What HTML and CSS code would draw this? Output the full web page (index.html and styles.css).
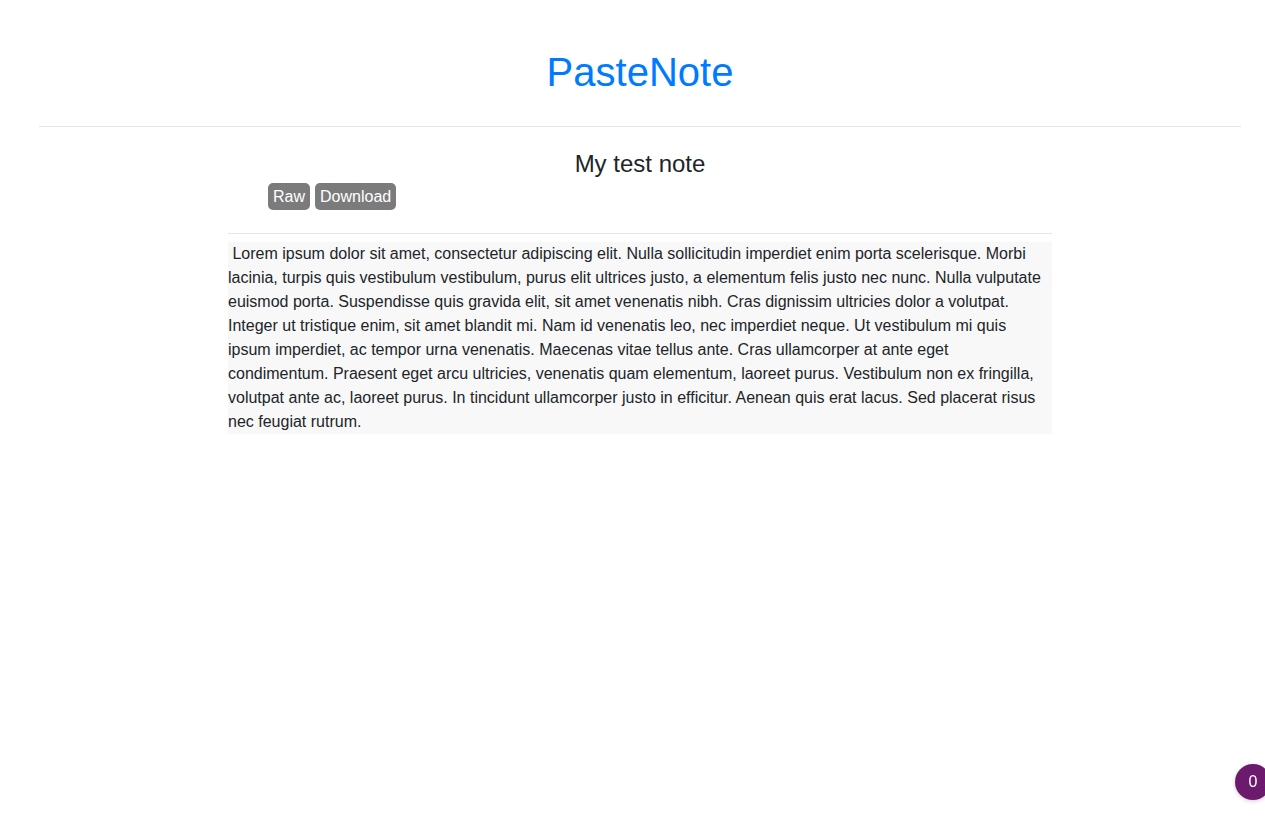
FILE: index.html
```html
<!DOCTYPE html>
<html>
<head>
<meta charset="utf-8">
<title>PasteNote</title>
<link rel="stylesheet" href="styles.css">
</head>
<body>
<div class="page">
  <header class="site-header">
    <h1 class="brand">PasteNote</h1>
  </header>
  <hr class="rule-wide">
  <main class="note">
    <h3 class="note-title">My test note</h3>
    <div class="actions">
      <a class="btn" href="#">Raw</a>
      <a class="btn" href="#">Download</a>
    </div>
    <hr class="rule">
    <div class="note-body"> Lorem ipsum dolor sit amet, consectetur adipiscing elit. Nulla sollicitudin imperdiet enim porta scelerisque. Morbi lacinia, turpis quis vestibulum vestibulum, purus elit ultrices justo, a elementum felis justo nec nunc. Nulla vulputate euismod porta. Suspendisse quis gravida elit, sit amet venenatis nibh. Cras dignissim ultricies dolor a volutpat. Integer ut tristique enim, sit amet blandit mi. Nam id venenatis leo, nec imperdiet neque. Ut vestibulum mi quis ipsum imperdiet, ac tempor urna venenatis. Maecenas vitae tellus ante. Cras ullamcorper at ante eget condimentum. Praesent eget arcu ultricies, venenatis quam elementum, laoreet purus. Vestibulum non ex fringilla, volutpat ante ac, laoreet purus. In tincidunt ullamcorper justo in efficitur. Aenean quis erat lacus. Sed placerat risus nec feugiat rutrum.</div>
  </main>
</div>
<div class="counter">0</div>
</body>
</html>
```
FILE: styles.css
```css
html, body {
  margin: 0;
  padding: 0;
  background: #fff;
  overflow: hidden;
}
body {
  font-family: "Liberation Sans", Arial, sans-serif;
  font-size: 16px;
  line-height: 24px;
  color: #212529;
}
.page {
  margin-left: 15px;
  display: flex;
  flex-direction: column;
}
.site-header {
  padding-top: 48px;
  display: flex;
  justify-content: center;
}
.brand {
  margin: 0;
  font-size: 40px;
  line-height: 48px;
  font-weight: 400;
  color: #007bff;
}
.rule-wide {
  margin: 30px 24px 0 24px;
  border: 0;
  border-top: 1px solid #e6e6e6;
  height: 0;
}
.note {
  width: 824px;
  align-self: center;
  display: flex;
  flex-direction: column;
}
.note-title {
  margin: 22px 0 0 0;
  font-size: 24px;
  line-height: 29px;
  font-weight: 400;
  text-align: center;
}
.actions {
  display: flex;
  gap: 5px;
  padding-left: 40px;
  margin-top: 5px;
}
.btn {
  display: inline-block;
  background: #7b7b7b;
  color: #fff;
  text-decoration: none;
  font-size: 16px;
  line-height: 24px;
  padding: 2px 5px 1px 5px;
  border-radius: 5px;
}
.rule {
  margin: 23px 0 0 0;
  border: 0;
  border-top: 1px solid #e6e6e6;
  height: 0;
}
.note-body {
  margin-top: 8px;
  background: #f8f8f8;
  white-space: pre-wrap;
  padding: 0;
}
.counter {
  position: fixed;
  right: -6px;
  bottom: 17px;
  width: 36px;
  height: 36px;
  border-radius: 50%;
  background: #6b1a6e;
  color: #fff;
  font-size: 16px;
  display: flex;
  align-items: center;
  justify-content: center;
  box-shadow: 0 1px 4px rgba(0,0,0,0.2);
}
```
